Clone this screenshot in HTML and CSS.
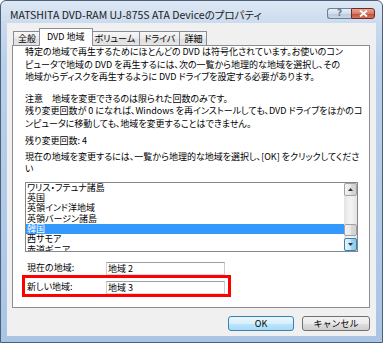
FILE: index.html
```html
<!DOCTYPE html>
<html lang="ja">

<head>
  <meta charset="UTF-8" />
  <meta name="viewport" content="width=device-width, initial-scale=1.0" />
  <title>MATSHITA DVD-RAM UJ-875S ATA Deviceのプロパティ</title>
  <link rel="stylesheet" href="styles.css">
</head>

<body>
  <div class="window">
    <div class="titlebar">
      <span class="title">MATSHITA DVD-RAM UJ-875S ATA Deviceのプロパティ</span>
      <div class="caption-buttons">
        <span class="cap-btn help">?</span>
        <span class="cap-btn close">
          <svg width="9" height="7" viewBox="0 0 9 7">
            <path d="M1 0.5 L8 6.5 M8 0.5 L1 6.5" stroke="#fff" stroke-width="1.8" />
          </svg>
        </span>
      </div>
    </div>

    <div class="client">
      <ul class="tabs">
        <li>全般</li>
        <li class="active">DVD 地域</li>
        <li>ボリューム</li>
        <li>ドライバ</li>
        <li>詳細</li>
      </ul>

      <div class="panel">
        <p>特定の地域で再生するためにほとんどの DVD は符号化されています。お使いのコン<br>ピュータで地域の DVD を再生するには、次の一覧から地理的な地域を選択し、その<br>地域からディスクを再生するように DVD ドライブを設定する必要があります。</p>
        <p class="note">注意　地域を変更できるのは限られた回数のみです。<br>残り変更回数が 0 になれば、Windows を再インストールしても、DVD ドライブをほかのコ<br>ンピュータに移動しても、地域を変更することはできません。</p>
        <p class="count">残り変更回数: 4</p>
        <p class="hint">現在の地域を変更するには、一覧から地理的な地域を選択し、[OK] をクリックしてくださ<br>い</p>

        <div class="listbox">
          <ul class="items">
            <li>ワリス・フテュナ諸島</li>
            <li>英国</li>
            <li>英領インド洋地域</li>
            <li>英領バージン諸島</li>
            <li class="selected">韓国</li>
            <li>西サモア</li>
            <li>赤道ギニア</li>
          </ul>
          <div class="scrollbar">
            <span class="sb-btn">
              <svg width="5" height="3" viewBox="0 0 5 3"><path d="M0 3 L2.5 0 L5 3 Z" fill="#333" /></svg>
            </span>
            <div class="sb-track">
              <span class="sb-thumb"></span>
            </div>
            <span class="sb-btn hover">
              <svg width="5" height="3" viewBox="0 0 5 3"><path d="M0 0 L5 0 L2.5 3 Z" fill="#333" /></svg>
            </span>
          </div>
        </div>

        <div class="region-row">
          <span class="label">現在の地域:</span>
          <span class="field">地域 2</span>
        </div>
        <div class="region-row marked">
          <span class="label">新しい地域:</span>
          <span class="field">地域 3</span>
        </div>
      </div>

      <div class="dialog-buttons">
        <button class="btn default">OK</button>
        <button class="btn">キャンセル</button>
      </div>
    </div>
  </div>
</body>

</html>
```

FILE: styles.css
```css
* {
  box-sizing: border-box;
}

body {
  margin: 0;
  font-family: "Noto Sans CJK JP", sans-serif;
  font-size: 9px;
  color: #000;
  background: #fff;
  font-feature-settings: "palt";
}

.window {
  width: 383px;
  height: 343px;
  display: flex;
  flex-direction: column;
  padding: 0 6px 6px 6px;
  border: 1px solid #4c607c;
  border-radius: 6px 6px 0 0;
  background: linear-gradient(to bottom, #dde8f4 0, #cbdbee 22px, #b9d0ea 60px, #aac5e4 100%);
}

/* タイトルバー */
.titlebar {
  height: 22px;
  display: flex;
  align-items: flex-start;
  justify-content: space-between;
  padding: 0 1px 0 3px;
}

.title {
  font-size: 10.5px;
  line-height: 12px;
  margin-top: 8px;
  color: #1a1a1a;
  white-space: nowrap;
}

.caption-buttons {
  display: flex;
  margin-top: 7px;
}

.cap-btn {
  height: 11px;
  display: flex;
  align-items: center;
  justify-content: center;
  border: 1px solid #6b7f99;
}

.cap-btn.help {
  width: 24px;
  border-right: none;
  border-radius: 3px 0 0 3px;
  background: linear-gradient(to bottom, #e7eef7 0, #d3deeb 50%, #b9c9dd 51%, #c9d7e8 100%);
  color: #6a7a90;
  font-family: "DejaVu Sans", sans-serif;
  font-weight: bold;
  font-size: 9px;
  line-height: 9px;
}

.cap-btn.close {
  width: 24px;
  border-color: #6d2a22;
  border-radius: 0 3px 3px 0;
  background: linear-gradient(to bottom, #e9a697 0, #d77a66 50%, #c24a33 51%, #d4755c 100%);
}

/* クライアント領域 */
.client {
  flex: 1;
  background: #f0f0f0;
  padding: 5px 6px 0 5px;
}

.tabs {
  margin: 0 0 0 1px;
  padding: 0;
  list-style: none;
  height: 17px;
  display: flex;
  align-items: flex-end;
}

.tabs li {
  height: 14px;
  padding: 0 4px;
  line-height: 13px;
  border: 1px solid #898c95;
  border-bottom: none;
  background: linear-gradient(to bottom, #f7f7f7 0, #ebebeb 50%, #dedede 51%, #e6e6e6 100%);
  white-space: nowrap;
}

.tabs li + li {
  margin-left: -1px;
}

.tabs li.active {
  position: relative;
  z-index: 1;
  height: 18px;
  margin: 0 -2px -1px -2px;
  padding: 0 7px;
  line-height: 15px;
  background: #fff;
}

.panel {
  height: 263px;
  background: #fff;
  border: 1px solid #898c95;
  padding: 0 11px 0 12px;
}

.panel p {
  margin: 0;
  line-height: 12.5px;
  white-space: nowrap;
}

.panel p.note {
  margin-top: 9px;
}

.panel p.count {
  margin-top: 4.5px;
}

.panel p.hint {
  margin-top: 3.5px;
}

/* リストボックス */
.listbox {
  margin-top: 6px;
  width: 333px;
  height: 70px;
  border: 1px solid #828790;
  display: flex;
  overflow: hidden;
}

.items {
  flex: 1;
  margin: 0;
  padding: 0;
  list-style: none;
}

.items li {
  height: 10.4px;
  line-height: 10.4px;
  padding-left: 1px;
  white-space: nowrap;
}

.items li.selected {
  background: #3399ff;
  color: #fff;
}

.scrollbar {
  width: 13px;
  display: flex;
  flex-direction: column;
  background: linear-gradient(to right, #e3e3e3, #f2f2f2 40%, #f2f2f2 60%, #e3e3e3);
}

.sb-btn {
  height: 13px;
  display: flex;
  align-items: center;
  justify-content: center;
  border: 1px solid #a2a2a2;
  border-radius: 2px;
  background: linear-gradient(to right, #f3f3f3, #e6e6e6 50%, #d9d9d9 51%, #d0d0d0);
}

.sb-btn.hover {
  border-color: #3c7fb1;
  background: linear-gradient(to right, #e5f4fc, #c4e5f6 50%, #9fd4f0 51%, #8ccaec);
}

.sb-track {
  flex: 1;
  padding-top: 28px;
}

.sb-thumb {
  display: block;
  height: 12px;
  border: 1px solid #a2a2a2;
  border-radius: 2px;
  background: linear-gradient(to right, #f3f3f3, #e8e8e8 50%, #dadada 51%, #d2d2d2);
}

/* 地域表示 */
.region-row {
  width: 203px;
  height: 16px;
  margin-top: 7px;
  padding: 0 3px 0 2px;
  display: flex;
  align-items: flex-end;
}

.region-row.marked {
  margin-top: 3px;
  outline: 3px solid #f00;
}

.region-row .label {
  width: 79px;
  line-height: 13px;
  padding-bottom: 1px;
}

.field {
  width: 119px;
  height: 13px;
  line-height: 11px;
  padding-left: 1px;
  border: 1px solid;
  border-color: #9c9fa6 #c9ccd3 #d8dde3 #c9ccd3;
  background: #fff;
}

/* ボタン */
.dialog-buttons {
  display: flex;
  justify-content: flex-end;
  gap: 8px;
  margin-top: 8px;
}

.btn {
  height: 15px;
  width: 68px;
  padding: 0;
  font-family: inherit;
  font-size: 9px;
  line-height: 12px;
  color: #000;
  border: 1px solid #707070;
  border-radius: 3px;
  background: linear-gradient(to bottom, #f2f2f2 0, #ebebeb 50%, #dddddd 51%, #cfcfcf 100%);
}

.btn.default {
  width: 66px;
  border-color: #3c7fb1;
  background: linear-gradient(to bottom, #eaf6fd 0, #d9f0fc 50%, #bee6fd 51%, #a7d9f5 100%);
}
```
